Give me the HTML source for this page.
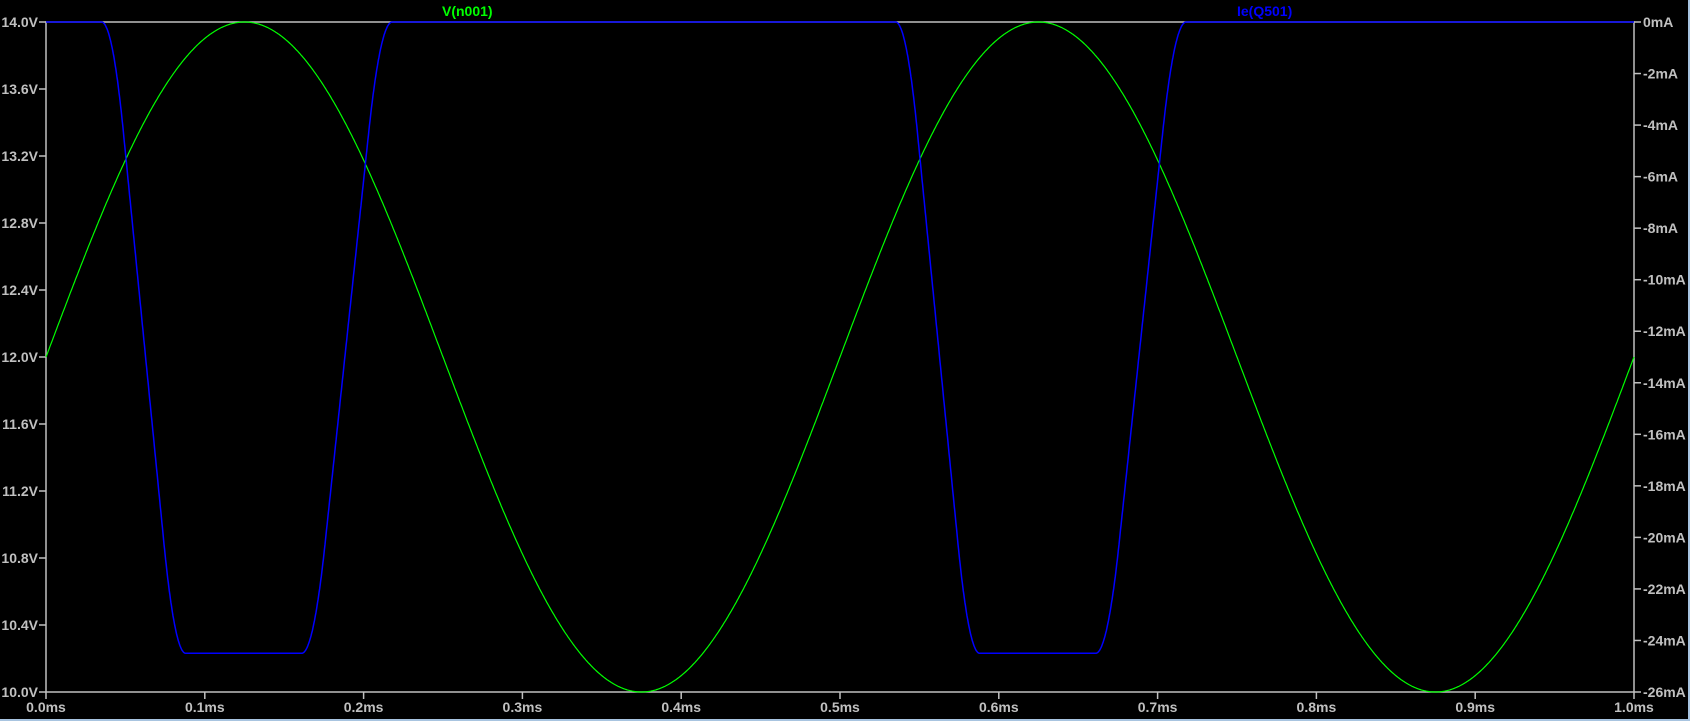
<!DOCTYPE html>
<html><head><style>
html,body{margin:0;padding:0;background:#000;}
body{width:1690px;height:721px;overflow:hidden;position:relative;}
#frame{position:absolute;right:0;top:0;width:2px;height:721px;background:#a8c4e0;}
#frame2{position:absolute;left:0;bottom:0;width:1690px;height:2px;background:#a8c4e0;}
svg text{font-family:"Liberation Sans",Arial,sans-serif;font-size:14px;font-weight:bold;fill:#c0c0c0;}
</style></head><body>
<svg id="s" width="1690" height="721" xmlns="http://www.w3.org/2000/svg" style="position:absolute;left:0;top:0">
<g id="ax" stroke="#c0c0c0" stroke-width="1.5" fill="none"></g>
<g id="lb"></g>
<path id="gr" stroke="#00ff00" stroke-width="1.2" fill="none"/>
<path id="bl" stroke="#0000ff" stroke-width="1.5" fill="none"/>
<text x="442" y="16" style="fill:#00ff00">V(n001)</text>
<text x="1237" y="16" style="fill:#0000ff">Ie(Q501)</text>
</svg>
<div id="frame"></div><div id="frame2"></div>
<script>
var L=46,R=1634,T=22,B=692,W=R-L,H=B-T;
var ax=document.getElementById('ax'),lb=document.getElementById('lb');
var NS='http://www.w3.org/2000/svg';
function el(p,tag,a,txt){var e=document.createElementNS(NS,tag);for(var k in a)e.setAttribute(k,a[k]);if(txt)e.textContent=txt;p.appendChild(e);return e;}
el(ax,'rect',{x:L,y:T,width:W,height:H});
for(var i=0;i<=10;i++){var y=T+H*i/10;el(ax,'line',{x1:L-7,y1:y,x2:L,y2:y});
 el(lb,'text',{x:L-8,y:y+5,'text-anchor':'end'},(14-0.4*i).toFixed(1)+'V');}
for(var i=0;i<=13;i++){var y=T+H*i/13;el(ax,'line',{x1:R,y1:y,x2:R+7,y2:y});
 el(lb,'text',{x:R+9,y:y+5},(i==0?'0':'-'+2*i)+'mA');}
for(var i=0;i<=10;i++){var x=L+W*i/10;el(ax,'line',{x1:x,y1:B,x2:x,y2:B+7});
 el(lb,'text',{x:x,y:B+20,'text-anchor':'middle'},(i/10).toFixed(1)+'ms');}
function X(t){return L+W*t;}
var g='';for(var i=0;i<=1500;i++){var t=i/1500;var v=12+2*Math.sin(2*Math.PI*t/0.5);var y=T+(14-v)/4*H;g+=(i?'L':'M')+X(t).toFixed(1)+' '+y.toFixed(1);}
document.getElementById('gr').setAttribute('d',g);
function tr(u){if(u<=0)return 0;if(u>=1)return 1;
 var a=0.26;if(u<a)return (u*u/(2*a))/(1-a);if(u>1-a){var w=1-u;return 1-(w*w/(2*a))/(1-a);}return (u-a/2)/(1-a);}
function f(t){t=((t%0.5)+0.5)%0.5;
 var d=tr((t-0.035)/(0.088-0.035)), r=tr((0.218-t)/(0.218-0.161));return Math.min(d,r);}
var b='';for(var i=0;i<=3000;i++){var t=i/3000;var I=-24.5*f(t);var y=T+(-I)/26*H;b+=(i?'L':'M')+X(t).toFixed(1)+' '+y.toFixed(1);}
document.getElementById('bl').setAttribute('d',b);
</script>
</body></html>
